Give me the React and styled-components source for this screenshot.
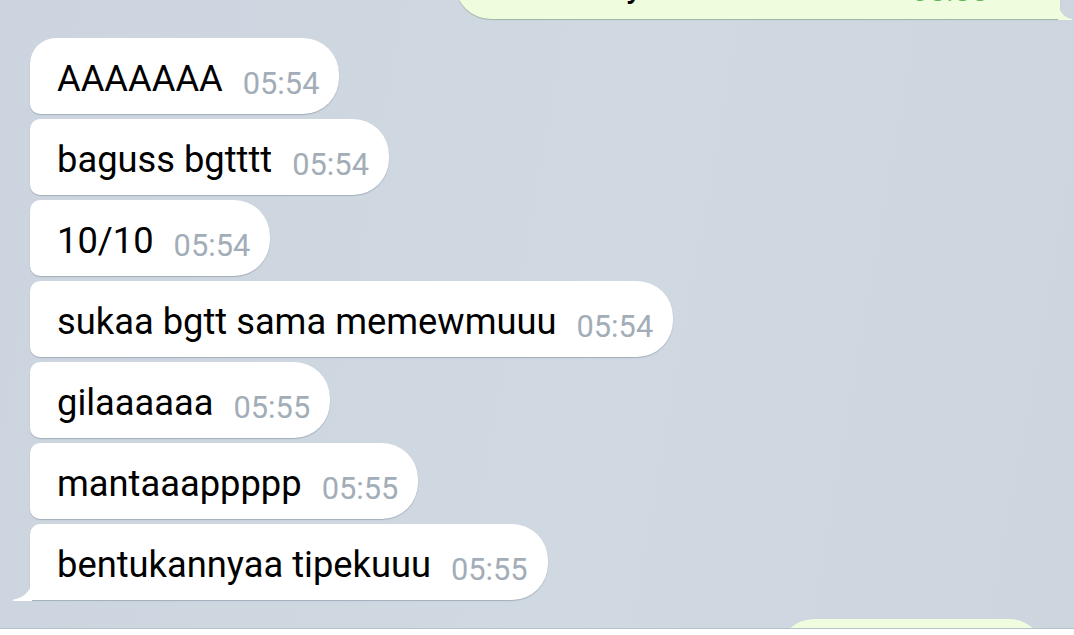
import React from "react";
import styled, { createGlobalStyle } from "styled-components";

const Global = createGlobalStyle`
  html, body { margin: 0; padding: 0; }
  body { font-family: Roboto, "Noto Sans", "Liberation Sans", sans-serif; background: #cdd6df; }
`;

const Screen = styled.div`
  width: 1074px;
  height: 635px;
  overflow: hidden;
  display: flex;
  flex-direction: column;
  background: linear-gradient(100deg, #ccd5df 0%, #d0d8e1 55%, #cdd5de 100%);
`;

const Chat = styled.div`
  flex: 1;
  min-height: 0;
  overflow: hidden;
  display: flex;
  flex-direction: column;
  align-items: flex-start;
`;

const Footer = styled.div`
  height: 6px;
  flex: none;
  background: #ffffff;
  border-top: 1px solid #b7bfc8;
`;

const Bubble = styled.div`
  position: relative;
  flex: none;
  box-sizing: border-box;
  height: 76px;
  padding: 20px 20px 0 27px;
  line-height: 42px;
  white-space: nowrap;
  background: #ffffff;
  box-shadow: 0 1px 1px rgba(80, 100, 120, 0.35);
  margin-left: 30px;
  margin-top: ${(p) => (p.$first ? "19px" : "5px")};
  border-radius: ${(p) => (p.$first ? "26px" : "10px")} 36px 36px
    ${(p) => (p.$last ? "0" : "10px")};
`;

const OutBubble = styled.div`
  position: relative;
  box-sizing: border-box;
  height: 76px;
  width: ${(p) => p.$w}px;
  align-self: flex-end;
  margin-right: ${(p) => p.$mr}px;
  margin-top: ${(p) => p.$mt}px;
  padding: 20px 40px 0 25px;
  line-height: 42px;
  white-space: nowrap;
  display: flex;
  justify-content: space-between;
  background: #effdde;
  box-shadow: 0 1px 1px rgba(90, 130, 80, 0.4);
  border-radius: 36px 36px ${(p) => (p.$tail ? "0" : "36px")} 36px;
  flex: none;
`;

const Text = styled.span`
  font-size: 36.3px;
  color: #000000;
`;

const Time = styled.span`
  font-size: 30.8px;
  color: ${(p) => (p.$out ? "#62b858" : "#a2adb8")};
  margin-left: 20px;
  vertical-align: -3px;
  display: inline-flex;
  align-items: center;
  gap: 10px;
`;

const TailIn = styled.svg`
  position: absolute;
  left: -18px;
  bottom: -1px;
  width: 20px;
  height: 22px;
  overflow: visible;
`;

const TailOut = styled.svg`
  position: absolute;
  right: -12px;
  bottom: -1px;
  width: 14px;
  height: 22px;
  overflow: visible;
`;

const messages = [
  ["AAAAAAA", "05:54"],
  ["baguss bgtttt", "05:54"],
  ["10/10", "05:54"],
  ["sukaa bgtt sama memewmuuu", "05:54"],
  ["gilaaaaaa", "05:55"],
  ["mantaaappppp", "05:55"],
  ["bentukannyaa tipekuuu", "05:55"],
];

const Checks = () => (
  <svg width="22" height="16" viewBox="0 0 22 16" fill="none" stroke="#62b858" strokeWidth="2.6" strokeLinecap="round" strokeLinejoin="round">
    <path d="M1 8.5 L5 12.5 L12 3" />
    <path d="M10 12.5 L11 12.5 L19 3" />
  </svg>
);

export default function App() {
  return (
    <>
      <Global />
      <Screen>
        <Chat>
          <OutBubble $w={605} $mr={14} $mt={-57} $tail>
            <Text>makasih yaa</Text>
            <Time $out>
              05:55
              <Checks />
            </Time>
            <TailOut viewBox="0 0 14 22">
              <path d="M0 0 C0 12 4 19 14 21 L14 22 L0 22 Z" fill="#effdde" />
            </TailOut>
          </OutBubble>
          {messages.map(([t, time], i) => (
            <Bubble key={i} $first={i === 0} $last={i === messages.length - 1}>
              <Text>{t}</Text>
              <Time>{time}</Time>
              {i === messages.length - 1 && (
                <TailIn viewBox="0 0 20 22">
                  <path d="M20 0 C20 10 14 18 2 20.5 C0.5 20.8 0.5 22 2 22 L20 22 Z" fill="#ffffff" />
                </TailIn>
              )}
            </Bubble>
          ))}
          <OutBubble $w={267} $mr={29} $mt={19} />
        </Chat>
        <Footer />
      </Screen>
    </>
  );
}
